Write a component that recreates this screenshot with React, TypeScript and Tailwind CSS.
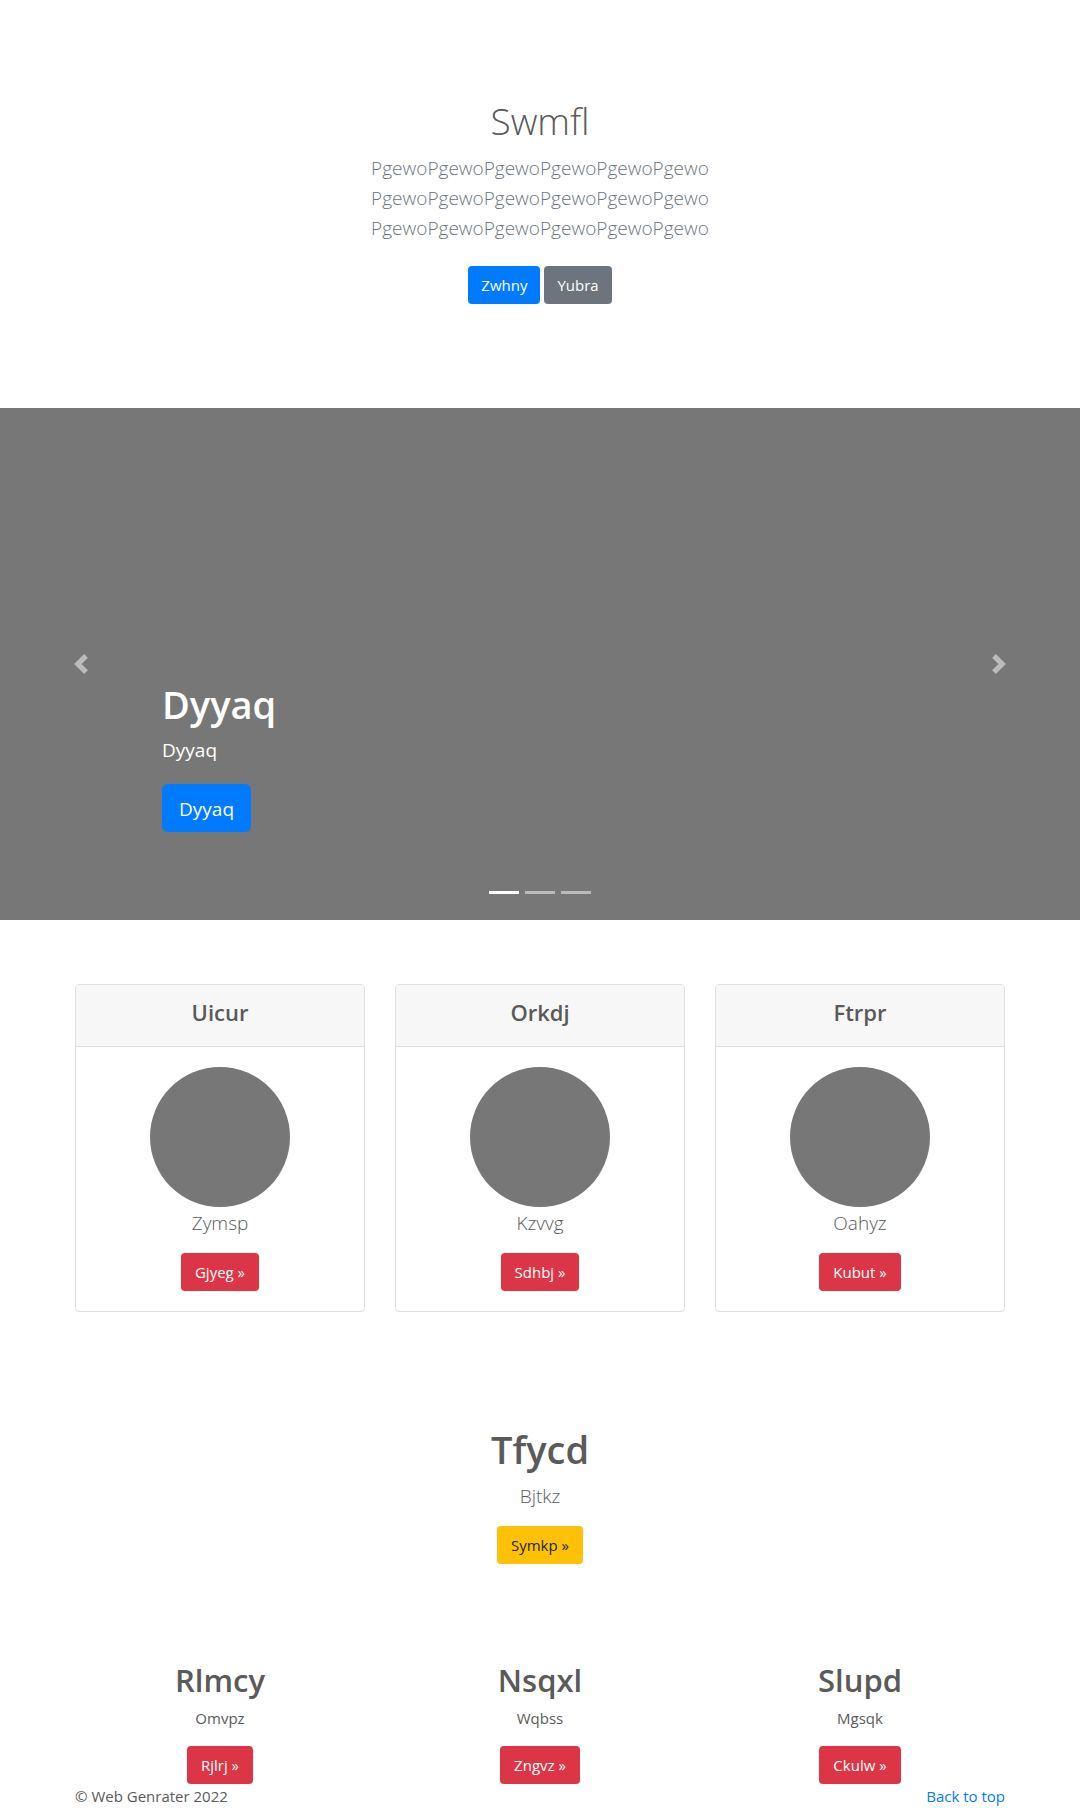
import React from "react";

const tones = {
  primary: "bg-[#007bff] text-white",
  secondary: "bg-[#6c757d] text-white",
  danger: "bg-[#dc3545] text-white",
  warning: "bg-[#ffc107] text-[#212529]",
};

function Btn({ tone, children }: { tone: keyof typeof tones; children: React.ReactNode }) {
  const padding = tone === "danger" || tone === "warning" ? "px-3.5" : "px-[13px]";
  return (
    <button type="button" className={`h-[38px] rounded text-[15px] leading-6 ${padding} ${tones[tone]}`}>
      {children}
    </button>
  );
}

const cards = [
  { title: "Uicur", text: "Zymsp", action: "Gjyeg »" },
  { title: "Orkdj", text: "Kzvvg", action: "Sdhbj »" },
  { title: "Ftrpr", text: "Oahyz", action: "Kubut »" },
];

const features = [
  { title: "Rlmcy", text: "Omvpz", action: "Rjlrj »" },
  { title: "Nsqxl", text: "Wqbss", action: "Zngvz »" },
  { title: "Slupd", text: "Mgsqk", action: "Ckulw »" },
];

const slides = [1, 2, 3];

export default function App() {
  return (
    <div className="bg-white font-['Open_Sans',sans-serif] text-[15px] leading-6 text-[#5a5a5a]">
      <section className="flex flex-col items-center px-4 pt-24 pb-[104px] text-center">
        <h1 className="mb-1.5 text-[37px] leading-[50px] font-light">Swmfl</h1>
        <p className="mb-[23px] pt-px text-[19px] leading-[30px] font-light text-[#6c757d]">
          PgewoPgewoPgewoPgewoPgewoPgewo
          <br />
          PgewoPgewoPgewoPgewoPgewoPgewo
          <br />
          PgewoPgewoPgewoPgewoPgewoPgewo
        </p>
        <div className="flex gap-1">
          <Btn tone="primary">Zwhny</Btn>
          <Btn tone="secondary">Yubra</Btn>
        </div>
      </section>

      <section aria-label="Slides" className="relative mb-16 flex h-[512px] items-end bg-[#777] px-[15%] pb-[88px] text-white">
        <div>
          <h2 className="mb-1.5 text-[38px] leading-[48px] font-semibold">Dyyaq</h2>
          <p className="mb-[18px] text-[19px] leading-8">Dyyaq</p>
          <button type="button" className="block h-12 rounded-md bg-[#007bff] px-[17px] pt-0.5 text-[19px] leading-[30px]">
            Dyyaq
          </button>
        </div>
        <button type="button" aria-label="Previous" className="absolute inset-y-0 left-0 flex w-[15%] items-center justify-center opacity-50">
          <svg viewBox="0 0 8 8" className="size-5" fill="#fff">
            <path d="M5.25 0l-4 4 4 4 1.5-1.5-2.5-2.5 2.5-2.5-1.5-1.5z" />
          </svg>
        </button>
        <button type="button" aria-label="Next" className="absolute inset-y-0 right-0 flex w-[15%] items-center justify-center opacity-50">
          <svg viewBox="0 0 8 8" className="size-5" fill="#fff">
            <path d="M2.75 0l-1.5 1.5 2.5 2.5-2.5 2.5 1.5 1.5 4-4-4-4z" />
          </svg>
        </button>
        <div className="absolute inset-x-0 bottom-4 flex justify-center gap-1.5">
          {slides.map((n) => (
            <button
              key={n}
              type="button"
              aria-label={`Slide ${n}`}
              className={`w-[30px] py-2.5 ${n === 1 ? "" : "opacity-50"}`}
            >
              <span className="block h-[3px] bg-white" />
            </button>
          ))}
        </div>
      </section>

      <main className="mx-auto max-w-[960px] px-[15px] text-center">
        <div className="mb-28 grid grid-cols-3 gap-[30px]">
          {cards.map((c) => (
            <article key={c.title} className="overflow-hidden rounded border border-[#dfdfdf]">
              <header className="border-b border-[#dfdfdf] bg-[#f7f7f7] pt-3 pb-[18px]">
                <h3 className="text-[22px] leading-[31px] font-semibold">{c.title}</h3>
              </header>
              <div className="flex flex-col items-center p-5">
                <div className="size-[140px] rounded-full bg-[#777]" />
                <p className="mb-3.5 text-[19px] leading-8 font-light">{c.text}</p>
                <Btn tone="danger">{c.action}</Btn>
              </div>
            </article>
          ))}
        </div>

        <section className="mb-24">
          <h2 className="mb-1.5 text-[38px] leading-[50px] font-semibold">Tfycd</h2>
          <p className="mb-3.5 text-[19px] leading-8 font-light">Bjtkz</p>
          <Btn tone="warning">Symkp »</Btn>
        </section>

        <div className="grid grid-cols-3 gap-[30px]">
          {features.map((f) => (
            <section key={f.title} className="flex flex-col items-center">
              <h2 className="mb-1.5 text-[31px] leading-10 font-semibold">{f.title}</h2>
              <p className="mb-4">{f.text}</p>
              <Btn tone="danger">{f.action}</Btn>
            </section>
          ))}
        </div>
      </main>

      <footer className="mx-auto flex max-w-[960px] justify-between px-[15px]">
        <p>© Web Genrater 2022</p>
        <a href="#" className="text-[#007bff]">
          Back to top
        </a>
      </footer>
    </div>
  );
}
